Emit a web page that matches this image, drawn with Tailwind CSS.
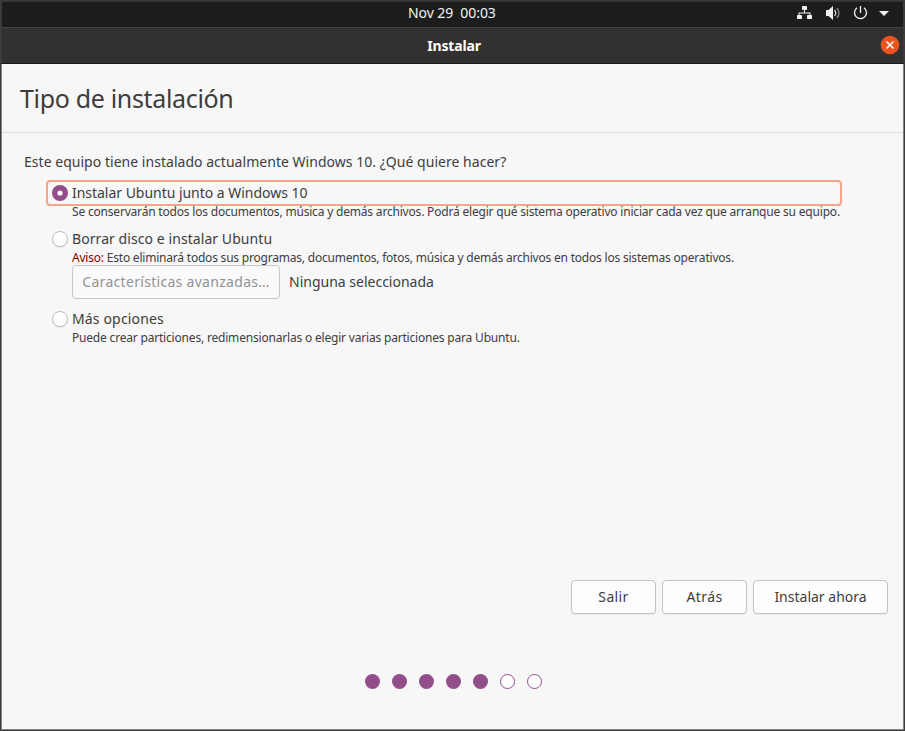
<!DOCTYPE html>
<html lang="es">
<head>
<meta charset="utf-8">
<title>Instalar</title>
<script src="https://cdn.jsdelivr.net/npm/@tailwindcss/browser@4"></script>
</head>
<body class="w-[905px] h-[731px] overflow-hidden font-['Noto_Sans',sans-serif] text-[14px] text-[#3d3d3d]">
<div class="w-[905px] h-[731px] flex flex-col bg-[#f7f7f7] border border-[#3c3a3b]">
  <header class="h-[27px] shrink-0 bg-[#1d1d1d] text-[#f2f2f2] border-x border-x-[#3c3a3b] border-t border-t-[#333132] border-b border-b-[#464445] relative">
    <div class="pl-[406px] leading-[21px] whitespace-pre tracking-[-0.07px]">Nov 29  00:03</div>
    <svg class="absolute right-0 top-[-1px]" width="110" height="25" viewBox="793 1 110 25" fill="#f2f2f2"><rect x="802" y="6" width="5" height="4" rx=".7"/><path d="M804 10h1v2.500h5.500V16h-1v-2.500h-10V16h-1v-3.500H804z"/><rect x="797" y="15" width="5" height="4" rx=".7"/><rect x="807" y="15" width="5" height="4" rx=".7"/><path d="M826 10h2.500l4.500-4v14l-4.500-4H826z"/><path d="M834.500 10q2.500 3 0 6" fill="none" stroke="#ddd" stroke-width="1.300"/><path d="M837 8q4 5 0 10" fill="none" stroke="#888" stroke-width="1.300"/><path d="M857 7.700a6 6 0 1 0 7 0M860.500 6v7" fill="none" stroke="#f2f2f2" stroke-width="1.300"/><path d="M879 11h10l-5 5z"/></svg>
  </header>
  <div class="h-[36px] shrink-0 bg-[#323031] text-white font-bold flex items-center justify-center relative border-x border-x-[#3c3a3b] border-b border-b-[#1b1a1a]">
    <span class="tracking-[-0.15px] pl-[3px]">Instalar</span>
    <svg class="absolute right-[3px] top-[7px]" width="20" height="20" viewBox="0 0 20 20"><circle cx="10" cy="10" r="9.300" fill="#e95420"/><path d="M6.500 6.500l7 7m0-7l-7 7" stroke="#fff" stroke-width="1.500"/></svg>
  </div>
  <div class="flex-1 flex flex-col border-x border-b border-[#858585]">
  <h1 class="h-[69px] shrink-0 border-b border-[#dcdcdc] pl-[18px] text-[25px] leading-[69px] tracking-[-0.33px]">Tipo de instalación</h1>
  <main class="flex-1 pl-[22px] pt-[18px]">
    <p class="leading-[22px] tracking-[0.03px]">Este equipo tiene instalado actualmente Windows 10. ¿Qué quiere hacer?</p>
    <div class="mt-[7px] ml-[22px] w-[796px] h-[26px] border-2 border-[#f3a68a] rounded flex items-center gap-1 pl-1"><svg width="16" height="16" viewBox="0 0 16 16"><circle cx="8" cy="8" r="8" fill="#924d8b"/><circle cx="8" cy="8" r="2.600" fill="#fff"/></svg><span class="leading-5 tracking-[-0.03px]">Instalar Ubuntu junto a Windows 10</span></div>
    <p class="ml-12 text-[12px] leading-[12px] whitespace-nowrap tracking-[-0.19px]">Se conservarán todos los documentos, música y demás archivos. Podrá elegir qué sistema operativo iniciar cada vez que arranque su equipo.</p>
    <div class="mt-[10px] ml-7 h-[22px] flex items-center gap-1"><i class="size-4 rounded-full bg-white border border-[#bdbdbd] shadow-[0_1px_1px_rgba(0,0,0,0.06)]"></i><span class="leading-5 tracking-[0.07px]">Borrar disco e instalar Ubuntu</span></div>
    <p class="ml-12 text-[12px] leading-[15px] whitespace-nowrap tracking-[-0.208px]"><span class="text-[#8b0000]">Aviso:</span> Esto eliminará todos sus programas, documentos, fotos, música y demás archivos en todos los sistemas operativos.</p>
    <div class="ml-12 h-[34px] flex items-center gap-[9px]"><button class="w-[208px] h-[34px] rounded border border-[#c7c7c7] bg-[#fafafa] text-[#929292] leading-5 tracking-[0.3px]">Características avanzadas…</button><span class="leading-5">Ninguna seleccionada</span></div>
    <div class="mt-[9px] ml-7 h-[22px] flex items-center gap-1"><i class="size-4 rounded-full bg-white border border-[#bdbdbd] shadow-[0_1px_1px_rgba(0,0,0,0.06)]"></i><span class="leading-5 tracking-[0.15px]">Más opciones</span></div>
    <p class="ml-12 text-[12px] leading-[15px] tracking-[-0.19px]">Puede crear particiones, redimensionarlas o elegir varias particiones para Ubuntu.</p>
  </main>
  <footer class="h-[149px] shrink-0">
    <div class="flex justify-end gap-[6px] pr-[15px] leading-5">
      <button class="w-[85px] h-[34px] rounded border border-[#c4c4c4] bg-[#fdfdfd] shadow-[0_1px_1px_rgba(0,0,0,0.06)] tracking-[0.35px]">Salir</button>
      <button class="w-[85px] h-[34px] rounded border border-[#c4c4c4] bg-[#fdfdfd] shadow-[0_1px_1px_rgba(0,0,0,0.06)] tracking-[0.4px]">Atrás</button>
      <button class="w-[135px] h-[34px] rounded border border-[#c4c4c4] bg-[#fdfdfd] shadow-[0_1px_1px_rgba(0,0,0,0.06)]">Instalar ahora</button>
    </div>
    <div class="flex gap-3 mt-[60px] ml-[363px]">
      <i class="size-[15px] rounded-full bg-[#924d8b]"></i>
      <i class="size-[15px] rounded-full bg-[#924d8b]"></i>
      <i class="size-[15px] rounded-full bg-[#924d8b]"></i>
      <i class="size-[15px] rounded-full bg-[#924d8b]"></i>
      <i class="size-[15px] rounded-full bg-[#924d8b]"></i>
      <i class="size-[15px] rounded-full bg-white border border-[#924d8b]"></i>
      <i class="size-[15px] rounded-full bg-white border border-[#924d8b]"></i>
    </div>
  </footer>
  </div>
</div>
</body>
</html>
